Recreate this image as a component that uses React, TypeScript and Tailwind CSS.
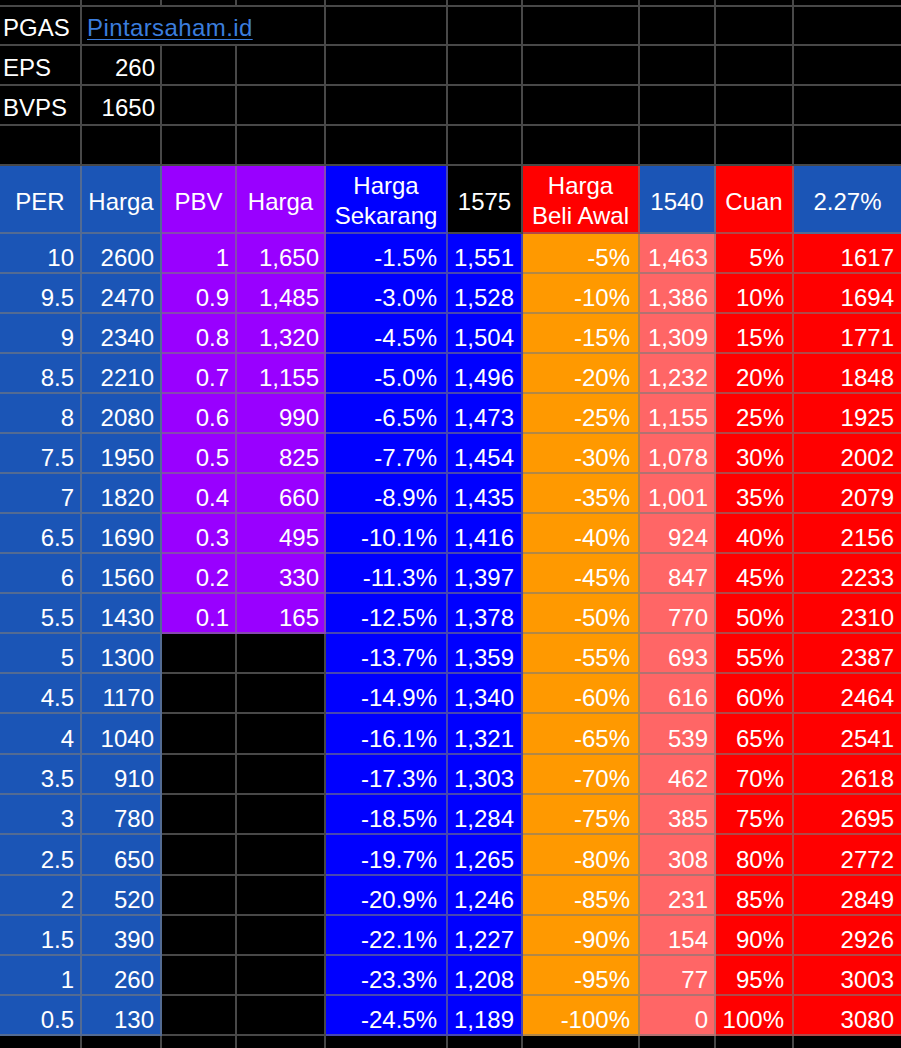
import type { ReactNode } from "react";

const rows = [
  ["10", "2600", "1", "1,650", "-1.5%", "1,551", "-5%", "1,463", "5%", "1617"],
  ["9.5", "2470", "0.9", "1,485", "-3.0%", "1,528", "-10%", "1,386", "10%", "1694"],
  ["9", "2340", "0.8", "1,320", "-4.5%", "1,504", "-15%", "1,309", "15%", "1771"],
  ["8.5", "2210", "0.7", "1,155", "-5.0%", "1,496", "-20%", "1,232", "20%", "1848"],
  ["8", "2080", "0.6", "990", "-6.5%", "1,473", "-25%", "1,155", "25%", "1925"],
  ["7.5", "1950", "0.5", "825", "-7.7%", "1,454", "-30%", "1,078", "30%", "2002"],
  ["7", "1820", "0.4", "660", "-8.9%", "1,435", "-35%", "1,001", "35%", "2079"],
  ["6.5", "1690", "0.3", "495", "-10.1%", "1,416", "-40%", "924", "40%", "2156"],
  ["6", "1560", "0.2", "330", "-11.3%", "1,397", "-45%", "847", "45%", "2233"],
  ["5.5", "1430", "0.1", "165", "-12.5%", "1,378", "-50%", "770", "50%", "2310"],
  ["5", "1300", "", "", "-13.7%", "1,359", "-55%", "693", "55%", "2387"],
  ["4.5", "1170", "", "", "-14.9%", "1,340", "-60%", "616", "60%", "2464"],
  ["4", "1040", "", "", "-16.1%", "1,321", "-65%", "539", "65%", "2541"],
  ["3.5", "910", "", "", "-17.3%", "1,303", "-70%", "462", "70%", "2618"],
  ["3", "780", "", "", "-18.5%", "1,284", "-75%", "385", "75%", "2695"],
  ["2.5", "650", "", "", "-19.7%", "1,265", "-80%", "308", "80%", "2772"],
  ["2", "520", "", "", "-20.9%", "1,246", "-85%", "231", "85%", "2849"],
  ["1.5", "390", "", "", "-22.1%", "1,227", "-90%", "154", "90%", "2926"],
  ["1", "260", "", "", "-23.3%", "1,208", "-95%", "77", "95%", "3003"],
  ["0.5", "130", "", "", "-24.5%", "1,189", "-100%", "0", "100%", "3080"],
];

// right padding per column for numbers
const pad = ["pr-[6px]", "pr-[6px]", "pr-[6px]", "pr-[5px]", "pr-[9px]", "pr-[7px]", "pr-[8px]", "pr-[6px]", "pr-[8px]", "pr-[7px]"];

function Cell({
  bg = "bg-black",
  last = false,
  className = "",
  children,
}: {
  bg?: string;
  last?: boolean;
  className?: string;
  children?: ReactNode;
}) {
  return (
    <div
      className={`flex whitespace-nowrap border-b-2 border-[#7a7a7a96] ${last ? "" : "border-r-2"} ${bg} ${className}`}
    >
      {children}
    </div>
  );
}

function BlankRow({ h }: { h: string }) {
  return (
    <>
      {Array.from({ length: 10 }).map((_, i) => (
        <Cell key={i} last={i === 9} className={h} />
      ))}
    </>
  );
}

function InfoRow({ label, value }: { label: string; value: string }) {
  return (
    <>
      <Cell className="h-[40px] items-end pb-[2px] pl-[3px]">{label}</Cell>
      <Cell className="h-[40px] items-end justify-end pb-[2px] pr-[5px]">{value}</Cell>
      {Array.from({ length: 8 }).map((_, i) => (
        <Cell key={i} last={i === 7} className="h-[40px]" />
      ))}
    </>
  );
}

function Head({ bg, last, children, two }: { bg: string; last?: boolean; children: ReactNode; two?: boolean }) {
  return (
    <Cell
      bg={bg}
      last={last}
      className={`h-[68px] items-center justify-center text-center leading-[30px] ${two ? "pt-[3px]" : "pt-[5px]"}`}
    >
      <div>{children}</div>
    </Cell>
  );
}

export default function App() {
  const colBg = (i: number, r: string[]) => {
    if (i < 2) return "bg-[#1b55b6]";
    if (i < 4) return r[2] ? "bg-[#9900ff]" : "bg-black";
    if (i < 6) return "bg-[#0000ff]";
    if (i === 6) return "bg-[#ff9900]";
    if (i === 7) return "bg-[#ff6666]";
    return "bg-[#ff0000]";
  };

  return (
    <div className="h-[1048px] w-[901px] overflow-hidden bg-black font-['Liberation_Sans',Arial,sans-serif] text-[24px] leading-[28px] text-white">
      <div className="grid grid-cols-[82px_80px_75px_89px_122px_75px_117px_76px_78px_107px]">
        <BlankRow h="h-[7px]" />

        {/* ticker + source */}
        <Cell className="h-[39px] items-end pb-[2px] pl-[3px]">PGAS</Cell>
        <Cell className="col-span-3 h-[39px] items-end pb-[2px] pl-[5px]">
          <a href="#" className="tracking-[0.4px] text-[#3b7ddd] underline decoration-1 underline-offset-[3px]">
            Pintarsaham.id
          </a>
        </Cell>
        {Array.from({ length: 6 }).map((_, i) => (
          <Cell key={i} last={i === 5} className="h-[39px]" />
        ))}

        <InfoRow label="EPS" value="260" />
        <InfoRow label="BVPS" value="1650" />
        <BlankRow h="h-[40px]" />

        <Head bg="bg-[#1b55b6]">PER</Head>
        <Head bg="bg-[#1b55b6]">Harga</Head>
        <Head bg="bg-[#9900ff]">PBV</Head>
        <Head bg="bg-[#9900ff]">Harga</Head>
        <Head bg="bg-[#0000ff]" two>
          Harga
          <br />
          Sekarang
        </Head>
        <Head bg="bg-black">1575</Head>
        <Head bg="bg-[#ff0000]" two>
          Harga
          <br />
          Beli Awal
        </Head>
        <Head bg="bg-[#1b55b6]">1540</Head>
        <Head bg="bg-[#ff0000]">Cuan</Head>
        <Head bg="bg-[#1b55b6]" last>
          2.27%
        </Head>

        {rows.map((r, ri) =>
          r.map((v, i) => (
            <Cell
              key={`${ri}-${i}`}
              bg={colBg(i, r)}
              last={i === 9}
              className={`${ri === 12 || ri === 15 ? "h-[41px]" : "h-[40px]"} items-end justify-end pb-0 ${pad[i]}`}
            >
              {v}
            </Cell>
          ))
        )}

        <BlankRow h="h-[14px] border-b-0" />
      </div>
    </div>
  );
}
